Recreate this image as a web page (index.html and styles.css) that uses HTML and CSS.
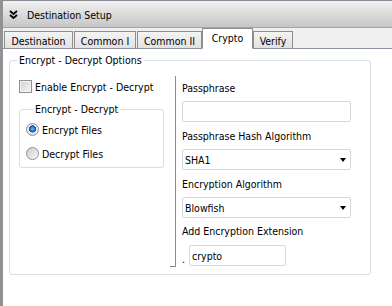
FILE: index.html
```html
<!DOCTYPE html>
<html>
<head>
<meta charset="utf-8">
<link rel="stylesheet" href="styles.css">
</head>
<body>
<div class="win">
  <div class="head">
    <svg class="chev" width="9" height="9" viewBox="0 0 9 9">
      <polyline points="1,1 4.5,4 8,1" fill="none" stroke="#000" stroke-width="1.8"/>
      <polyline points="1,5 4.5,8 8,5" fill="none" stroke="#000" stroke-width="1.8"/>
    </svg>
    <span>Destination Setup</span>
  </div>
  <div class="tabs">
    <div class="tab t1">Destination</div>
    <div class="tab t2">Common I</div>
    <div class="tab t3">Common II</div>
    <div class="tab sel t4">Crypto</div>
    <div class="tab t5">Verify</div>
  </div>
  <div class="body">
    <fieldset class="grp">
      <legend>Encrypt - Decrypt Options</legend>
      <div class="cols">
        <div class="left">
          <div class="chk"><span class="box"></span><span>Enable Encrypt - Decrypt</span></div>
          <fieldset class="inner">
            <legend>Encrypt - Decrypt</legend>
            <div class="radio"><span class="dot on"></span><span>Encrypt Files</span></div>
            <div class="radio r2"><span class="dot"></span><span>Decrypt Files</span></div>
          </fieldset>
        </div>
        <div class="right">
          <div class="lbl l1">Passphrase</div>
          <div class="field"></div>
          <div class="lbl">Passphrase Hash Algorithm</div>
          <div class="field sel-f"><span>SHA1</span><span class="arrow"></span></div>
          <div class="lbl">Encryption Algorithm</div>
          <div class="field sel-f"><span>Blowfish</span><span class="arrow"></span></div>
          <div class="lbl l4">Add Encryption Extension</div>
          <div class="extrow"><span class="dotc">.</span><div class="field ext"><span>crypto</span></div></div>
        </div>
      </div>
    </fieldset>
  </div>
</div>
</body>
</html>
```

FILE: styles.css
```css
* { box-sizing: border-box; }
html, body { margin: 0; padding: 0; background: #fff; }
body {
  font-family: "DejaVu Sans Condensed", "DejaVu Sans", "Liberation Sans", sans-serif;
  font-size: 10.5px;
  line-height: 12px;
  color: #000;
}
.win {
  width: 392px;
  height: 306px;
  border-left: 3px solid #929292;
  display: flex;
  flex-direction: column;
  overflow: hidden;
}
.head {
  height: 28px;
  border-top: 1px solid #8a8a96;
  border-bottom: 1px solid #a4a4a8;
  background: linear-gradient(#f1f1f1, #c6c6c6);
  display: flex;
  align-items: center;
  padding-left: 6px;
}
.chev { margin-top: 1px; }
.head span { margin-left: 9px; margin-top: 1px; }
.tabs {
  height: 21px;
  background: #f0f0f0;
  border-bottom: 1px solid #8e8f9f;
  display: flex;
  align-items: flex-end;
  padding-left: 1px;
}
.tab {
  height: 18px;
  margin-bottom: -1px;
  border: 1px solid #8d8d8d;
  border-bottom: 1px solid #8e8f9f;
  background: linear-gradient(#f4f4f4, #e2e2e2);
  display: flex;
  align-items: center;
  justify-content: center;
  padding-top: 1px;
}
.t1 { width: 69px; margin-right: 1px; }
.t2 { width: 62px; margin-right: 1px; }
.t3 { width: 65px; }
.t4 { width: 51px; }
.t5 { width: 40px; }
.tab.sel {
  height: 21px;
  background: #fff;
  border-bottom-color: #fff;
  padding-top: 0;
  align-items: flex-start;
  padding-top: 3px;
}
.body {
  flex: 1;
  background: #fff;
  padding: 5px 0 0 6px;
}
.grp {
  margin: 0;
  width: 362px;
  border: 1px solid #d5dfe5;
  border-radius: 3px;
  padding: 0 0 7px 0;
}
.grp > legend {
  margin-left: 7px;
  padding: 0 2px;
  line-height: 12px;
}
.cols { display: flex; }
.left {
  position: relative;
  width: 166px;
  height: 191px;
  margin-top: 10px;
  border-right: 1px solid #8c8c8c;
  padding-top: 4px;
}
.left::after {
  content: "";
  position: absolute;
  right: -1px;
  bottom: 0;
  width: 6px;
  height: 1px;
  background: #8c8c8c;
}
.chk {
  display: flex;
  align-items: center;
  padding-left: 9px;
  height: 13px;
}
.box {
  width: 13px;
  height: 13px;
  border: 1px solid #8e8f8f;
  background: linear-gradient(135deg, #cfcfcf, #f7f7f7);
  box-shadow: inset 0 0 0 1px #f2f2f2;
  margin-right: 3px;
}
.inner {
  margin: 10px 0 0 9px;
  width: 145px;
  border: 1px solid #d5dfe5;
  border-radius: 3px;
  padding: 8px 0 7px 6px;
}
.inner > legend {
  margin-left: 7px;
  padding: 0 2px;
  line-height: 12px;
}
.radio {
  display: flex;
  align-items: center;
  height: 13px;
}
.r2 { margin-top: 11px; }
.dot {
  width: 13px;
  height: 13px;
  border-radius: 50%;
  border: 1px solid #8e8f8f;
  background: linear-gradient(135deg, #cdcdcd, #f8f8f8);
  margin-right: 3px;
}
.dot.on {
  background: radial-gradient(circle at 50% 45%, #6fb5ef 0, #2a7fd0 2px, #0b4f98 3.4px, #f2f2f2 3.8px, #dcdcdc 6px);
}
.right {
  padding-left: 6px;
  width: 176px;
}
.lbl { margin-top: 8px; height: 12px; }
.lbl.l1 { margin-top: 16px; }
.lbl.l4 { margin-top: 7px; }
.field {
  margin-top: 7px;
  height: 21px;
  width: 169px;
  border: 1px solid #d3dbe2;
  border-radius: 2px;
  background: #fff;
  display: flex;
  align-items: center;
  padding-left: 2px;
}
.sel-f { justify-content: space-between; padding-right: 4px; }
.arrow {
  width: 0;
  height: 0;
  border-left: 3.5px solid transparent;
  border-right: 3.5px solid transparent;
  border-top: 4px solid #000;
  margin-top: 1px;
}
.extrow {
  display: flex;
  align-items: flex-end;
  margin-top: 8px;
}
.dotc { width: 7px; line-height: 14px; }
.field.ext { width: 97px; margin-top: 0; }
```
